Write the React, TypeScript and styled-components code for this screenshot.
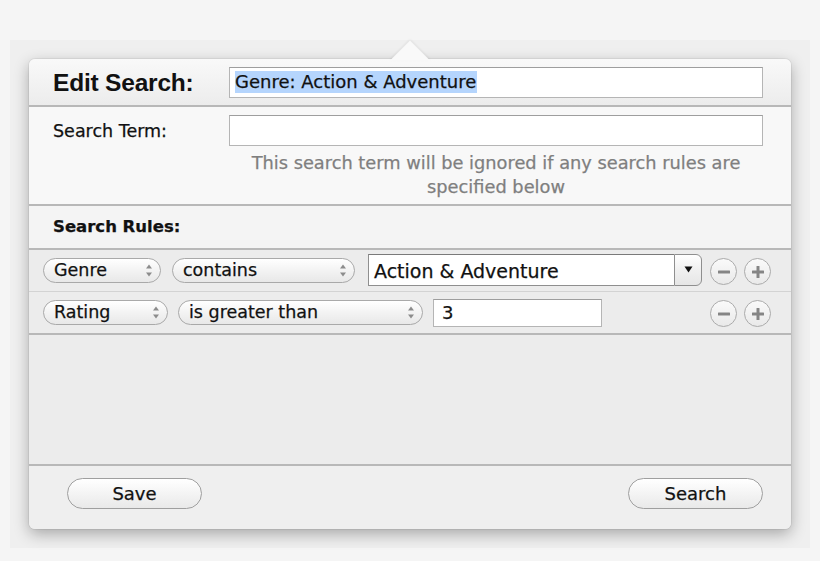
import React from "react";
import styled, { createGlobalStyle } from "styled-components";

const Global = createGlobalStyle`
  html, body { margin: 0; padding: 0; background: #f5f5f5; }
  body {
    font-family: "DejaVu Sans", "Noto Sans", sans-serif;
    color: #111;
    -webkit-text-stroke: 0.25px currentColor;
  }
  * { box-sizing: border-box; }
`;

const Page = styled.div`
  width: 820px;
  height: 561px;
  padding: 40px 10px 13px;
`;

const Frame = styled.div`
  position: relative;
  height: 508px;
  background: #efefef;
  padding: 19px;
`;

const Arrow = styled.svg`
  position: absolute;
  left: 380px;
  top: 0;
  width: 40px;
  height: 21px;
  z-index: 2;
  filter: drop-shadow(0 -1px 1px rgba(0, 0, 0, 0.08));
`;

const Popover = styled.div`
  height: 470px;
  border-radius: 6px;
  background: #ededed;
  box-shadow: 0 5px 15px rgba(0, 0, 0, 0.3), 0 0 0 1px rgba(0, 0, 0, 0.05);
  display: flex;
  flex-direction: column;
  overflow: hidden;
`;

const Header = styled.div`
  height: 48px;
  flex: none;
  display: flex;
  align-items: center;
  padding: 0 28px 0 24px;
  background: linear-gradient(#f9f9f9, #ececec);
  border-bottom: 2px solid #b8b8b8;
`;

const Title = styled.div`
  width: 176px;
  flex: none;
  font-family: "Liberation Sans", Arial, sans-serif;
  font-weight: bold;
  font-size: 24.5px;
  color: #111;
  letter-spacing: -0.2px;
  padding-top: 2px;
  -webkit-text-stroke: 0;
`;

const Field = styled.div<{ $h?: number; $size?: number }>`
  flex: 1;
  height: ${(p) => p.$h ?? 31}px;
  background: #fff;
  border: 1px solid #b5b5b5;
  border-top-color: #9e9e9e;
  display: flex;
  align-items: center;
  padding-left: 5px;
  font-size: ${(p) => p.$size ?? 18}px;
  color: #111;
`;

const Selected = styled.span`
  background: #b5d5fd;
  line-height: 22px;
  padding-right: 1px;
`;

const TermSection = styled.div`
  height: 99px;
  flex: none;
  display: grid;
  grid-template-columns: 176px 1fr;
  grid-template-rows: 31px auto;
  align-items: center;
  padding: 8px 28px 0 24px;
  background: #f8f8f8;
  border-bottom: 2px solid #b8b8b8;
`;

const Label = styled.div`
  font-size: 17.5px;
  color: #111;
  padding-top: 1px;
`;

const Help = styled.div`
  grid-column: 2;
  text-align: center;
  font-size: 17.8px;
  line-height: 24px;
  color: #7f7f7f;
  padding-top: 0;
`;

const RulesTitle = styled.div`
  height: 44px;
  flex: none;
  display: flex;
  align-items: center;
  padding: 0 24px 1px;
  font-weight: bold;
  font-size: 16.5px;
  background: #f4f4f4;
  border-bottom: 2px solid #b8b8b8;
`;

const Row = styled.div<{ $last?: boolean }>`
  height: ${(p) => (p.$last ? 43 : 42)}px;
  flex: none;
  display: flex;
  align-items: center;
  padding: 0 20px 0 14px;
  background: #ececec;
  border-bottom: ${(p) => (p.$last ? "2px solid #b8b8b8" : "1px solid #d3d3d3")};
`;

const Popup = styled.div<{ $w: number; $mr: number }>`
  width: ${(p) => p.$w}px;
  margin-right: ${(p) => p.$mr}px;
  height: 25px;
  flex: none;
  border: 1px solid #a9a9a9;
  border-radius: 13px;
  background: linear-gradient(#ffffff, #f3f3f3 50%, #e8e8e8);
  display: flex;
  align-items: center;
  justify-content: space-between;
  padding: 0 7px 1px 10px;
  font-size: 17.5px;
  color: #111;
`;

const UpDown = styled.svg`
  width: 8px;
  height: 15px;
  flex: none;
`;

const Combo = styled.div`
  width: 334px;
  height: 32px;
  flex: none;
  display: flex;
  margin-top: -2px;
`;

const ComboText = styled.div`
  flex: 1;
  background: #fff;
  border: 1px solid #8f8f8f;
  border-right: none;
  border-top-color: #7a7a7a;
  display: flex;
  align-items: center;
  padding: 2px 0 0 5px;
  font-size: 19px;
  color: #111;
`;

const ComboButton = styled.div`
  width: 28px;
  flex: none;
  border: 1px solid #8f8f8f;
  border-radius: 0 6px 6px 0;
  background: linear-gradient(#ffffff, #f0f0f0 50%, #e6e6e6);
  display: flex;
  align-items: center;
  justify-content: center;
`;

const NumField = styled(Field)`
  flex: none;
  width: 169px;
  padding-left: 8px;
`;

const RowButtons = styled.div`
  margin-left: auto;
  display: flex;
  gap: 7px;
  margin-top: 2px;
`;

const Circle = styled.div`
  width: 27px;
  height: 27px;
  border-radius: 50%;
  border: 1px solid #ababab;
  background: linear-gradient(#fafafa, #e9e9e9);
  display: flex;
  align-items: center;
  justify-content: center;
`;

const Empty = styled.div`
  flex: 1;
  background: #ececec;
  border-bottom: 2px solid #b8b8b8;
`;

const Footer = styled.div`
  height: 63px;
  flex: none;
  display: flex;
  justify-content: space-between;
  align-items: flex-start;
  padding: 12px 28px 0 38px;
  background: #efefef;
`;

const Button = styled.div`
  width: 135px;
  height: 31px;
  border: 1px solid #9f9f9f;
  border-radius: 16px;
  background: linear-gradient(#ffffff, #f4f4f4 50%, #e9e9e9);
  display: flex;
  align-items: center;
  justify-content: center;
  font-size: 18px;
  color: #111;
  padding-bottom: 1px;
`;

const UpDownIcon = () => (
  <UpDown viewBox="0 0 8 15">
    <path d="M4 1.5 L7 5.5 L1 5.5 Z" fill="#8c8c8c" />
    <path d="M4 13.5 L7 9.5 L1 9.5 Z" fill="#8c8c8c" />
  </UpDown>
);

const MinusIcon = () => (
  <svg width="16" height="16" viewBox="0 0 16 16">
    <rect x="2" y="6.5" width="12" height="3" rx="0.5" fill="#858585" />
  </svg>
);

const PlusIcon = () => (
  <svg width="16" height="16" viewBox="0 0 16 16">
    <rect x="2" y="6.5" width="12" height="3" rx="0.5" fill="#858585" />
    <rect x="6.5" y="2" width="3" height="12" rx="0.5" fill="#858585" />
  </svg>
);

const RuleButtons = () => (
  <RowButtons>
    <Circle>
      <MinusIcon />
    </Circle>
    <Circle>
      <PlusIcon />
    </Circle>
  </RowButtons>
);

export default function App() {
  return (
    <>
      <Global />
      <Page>
        <Frame>
          <Arrow viewBox="0 0 40 21">
            <path d="M0 20.5 L20 0.5 L40 20.5 Z" fill="#f9f9f9" />
          </Arrow>
          <Popover>
            <Header>
              <Title>Edit Search:</Title>
              <Field>
                <Selected>Genre: Action &amp; Adventure</Selected>
              </Field>
            </Header>
            <TermSection>
              <Label>Search Term:</Label>
              <Field />
              <Help>
                This search term will be ignored if any search rules are
                <br />
                specified below
              </Help>
            </TermSection>
            <RulesTitle>Search Rules:</RulesTitle>
            <Row>
              <Popup $w={118} $mr={11}>
                Genre
                <UpDownIcon />
              </Popup>
              <Popup $w={183} $mr={13}>
                contains
                <UpDownIcon />
              </Popup>
              <Combo>
                <ComboText>Action &amp; Adventure</ComboText>
                <ComboButton>
                  <svg width="9" height="7" viewBox="0 0 9 7">
                    <path d="M0.5 0.5 L8.5 0.5 L4.5 6.5 Z" fill="#111" />
                  </svg>
                </ComboButton>
              </Combo>
              <RuleButtons />
            </Row>
            <Row $last>
              <Popup $w={125} $mr={10}>
                Rating
                <UpDownIcon />
              </Popup>
              <Popup $w={245} $mr={10}>
                is greater than
                <UpDownIcon />
              </Popup>
              <NumField $h={28}>3</NumField>
              <RuleButtons />
            </Row>
            <Empty />
            <Footer>
              <Button>Save</Button>
              <Button>Search</Button>
            </Footer>
          </Popover>
        </Frame>
      </Page>
    </>
  );
}
